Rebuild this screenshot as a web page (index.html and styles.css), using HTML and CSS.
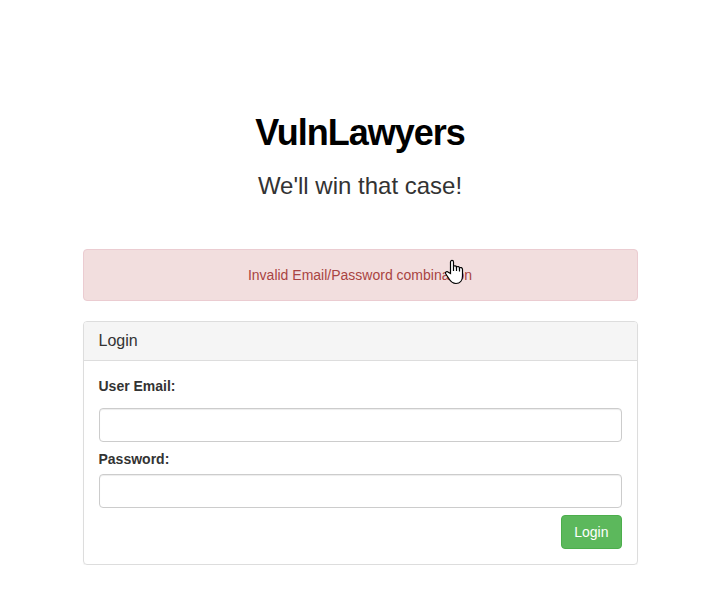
FILE: index.html
```html
<!DOCTYPE html>
<html lang="en">
<head>
<meta charset="utf-8">
<title>VulnLawyers</title>
<link rel="stylesheet" href="styles.css">
</head>
<body>
<main class="container">
  <h1 class="brand">VulnLawyers</h1>
  <h3 class="tagline">We'll win that case!</h3>
  <div class="alert">Invalid Email/Password combination
    <svg class="pointer" width="20" height="26" viewBox="0 0 20 26"><path d="M6.500 14.500V3C6.500 .9 9.500 .9 9.500 3V7.700C10 6.300 12.500 6.500 12.500 8.200C13.500 7 15.500 7.500 15.500 9C16.500 8 18.500 8.600 18.500 10.500V17C18.500 21.500 16 24.500 12 24.500C8.500 24.500 6.500 22.500 4.500 19L1.700 14.800C.8 12.800 3.200 12 4.300 13.200Z" fill="#fff" stroke="#000" stroke-width="1.200"/><path d="M9.500 7.500V12M12.500 8V12M15.500 9V12.500" stroke="#000" stroke-width="1.200"/></svg>
  </div>
  <form class="panel">
    <div class="panel-heading">Login</div>
    <div class="panel-body">
      <label class="label-first" for="email">User Email:</label>
      <input id="email" class="field" type="email">
      <label class="label-second" for="password">Password:</label>
      <input id="password" class="field" type="password">
      <div class="actions"><button class="btn" type="button">Login</button></div>
    </div>
  </form>
</main>
</body>
</html>
```
FILE: styles.css
```css
* { box-sizing: border-box; }
body {
  margin: 0;
  background: #fff;
  color: #333;
  font: 14px/20px "Liberation Sans", Arial, sans-serif;
}
.container { width: 555px; margin: 0 0 0 82.5px; padding-top: 113px; }
.brand {
  margin: 0;
  text-align: center;
  font-size: 36px;
  line-height: 40px;
  font-weight: 700;
  letter-spacing: -1px;
  color: #000;
}
.tagline {
  margin: 20px 0 50px;
  text-align: center;
  font-size: 24px;
  line-height: 26px;
  font-weight: 400;
}
.alert {
  position: relative;
  height: 52px;
  padding: 15px;
  border: 1px solid #ebccd1;
  border-radius: 4px;
  background: #f2dede;
  color: #a94442;
  text-align: center;
}
.pointer { position: absolute; left: 360.5px; top: 9px; fill: none; }
.panel {
  height: 244px;
  margin: 20px 0 0;
  border: 1px solid #ddd;
  border-radius: 4px;
  box-shadow: 0 1px 1px rgba(0, 0, 0, .05);
}
.panel-heading {
  height: 39px;
  padding: 10px 15px;
  border-bottom: 1px solid #ddd;
  border-radius: 3px 3px 0 0;
  background: #f5f5f5;
  font-size: 16px;
  line-height: 18px;
}
.panel-body { padding: 15px; }
label { display: block; font-weight: 700; }
.label-first { margin-bottom: 12px; }
.label-second { margin: 7px 0 5px; }
.field {
  display: block;
  width: 100%;
  height: 34px;
  padding: 6px 12px;
  border: 1px solid #ccc;
  border-radius: 4px;
  background: #fff;
  box-shadow: inset 0 1px 1px rgba(0, 0, 0, .075);
}
.actions { display: flex; justify-content: flex-end; margin-top: 7px; }
.btn {
  height: 34px;
  padding: 6px 12px;
  border: 1px solid #4cae4c;
  border-radius: 4px;
  background: #5cb85c;
  color: #fff;
  font: inherit;
}
```
